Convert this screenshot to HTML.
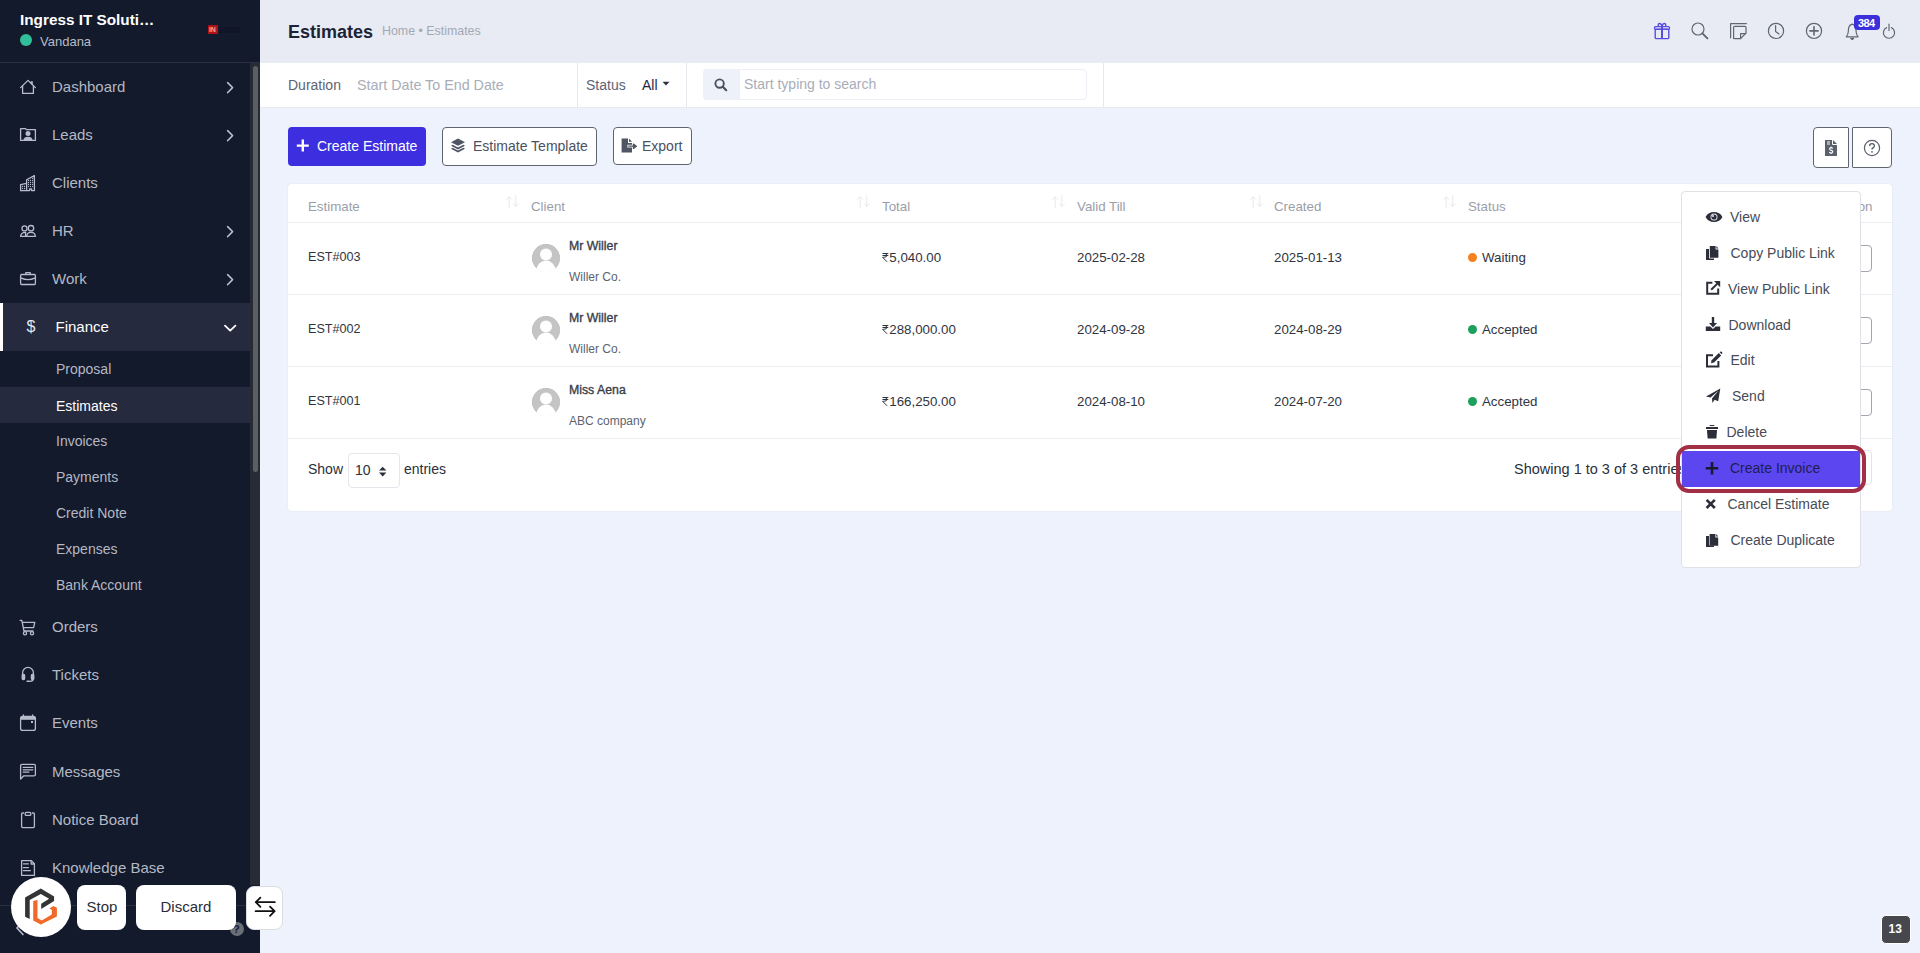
<!DOCTYPE html>
<html><head><meta charset="utf-8">
<style>
*{box-sizing:border-box;margin:0;padding:0}
html,body{width:1920px;height:953px;overflow:hidden;font-family:"Liberation Sans",sans-serif;background:#eef2fc;position:relative}
.a{position:absolute;white-space:nowrap;line-height:1}
svg{position:absolute;overflow:visible}
.mt{position:absolute;left:52px;font-size:15px;line-height:1;color:#b4b8c4;white-space:nowrap}
.st{position:absolute;left:56px;font-size:14px;line-height:1;color:#b4b8c4;white-space:nowrap}
.ic{fill:none;stroke:#b7bccb;stroke-width:1.3;stroke-linejoin:round;stroke-linecap:round}
.th{position:absolute;top:200px;font-size:13.3px;line-height:1;color:#9a9ea9;white-space:nowrap}
.td{position:absolute;font-size:13.3px;line-height:1;color:#30343e;white-space:nowrap}
.nm{position:absolute;left:569px;font-size:12.3px;-webkit-text-stroke:.35px #3a3e4a;line-height:1;color:#3a3e4a;white-space:nowrap}
.co{position:absolute;left:569px;font-size:12px;line-height:1;color:#5d6370;white-space:nowrap}
.hl{position:absolute;left:288px;width:1604px;height:1px;background:#eceef3}
.dt{position:absolute;font-size:14px;line-height:1;color:#464b57;white-space:nowrap}
.hic{fill:none;stroke:#62676f;stroke-width:1.2;stroke-linecap:round;stroke-linejoin:round}
.dk{fill:#2c2f3a}
</style></head><body>
<!-- SIDEBAR -->
<div class="a" style="left:0;top:0;width:260px;height:953px;background:#131a2b"></div>
<div class="a" style="left:20px;top:12px;font-size:15.3px;font-weight:bold;color:#fff">Ingress IT Soluti…</div>
<div class="a" style="left:20px;top:34px;width:12px;height:12px;border-radius:50%;background:#2fbf9b"></div>
<div class="a" style="left:40px;top:35px;font-size:13px;color:#b9bcc8">Vandana</div>
<div class="a" style="left:208px;top:25px;width:10px;height:9px;background:#b01218;border-radius:1px"></div>
<div class="a" style="left:209px;top:26px;font-size:7px;font-weight:bold;color:#f3a0a0;letter-spacing:-0.3px">IN</div>
<div class="a" style="left:219px;top:27px;width:21px;height:6px;background:#0f1424;opacity:.6"></div>
<div class="a" style="left:0;top:62px;width:260px;height:1px;background:#2a3040"></div>
<div class="a" style="left:250px;top:63px;width:10px;height:822px;background:#262b36"></div>
<div class="a" style="left:253px;top:66px;width:4.5px;height:406px;border-radius:3px;background:#5d5e62"></div>

<!-- rows -->
<div class="a" style="left:0;top:303px;width:250px;height:48px;background:#252a3f"></div>
<div class="a" style="left:0;top:303px;width:3px;height:48px;background:#fff"></div>
<div class="a" style="left:0;top:387px;width:250px;height:36px;background:#252a3f"></div>

<div class="mt" style="top:79px">Dashboard</div>
<div class="mt" style="top:127px">Leads</div>
<div class="mt" style="top:175px">Clients</div>
<div class="mt" style="top:223px">HR</div>
<div class="mt" style="top:271px">Work</div>
<div class="mt" style="top:319px;left:55.5px;color:#fff">Finance</div>
<div class="st" style="top:362px">Proposal</div>
<div class="st" style="top:398.5px;color:#fff">Estimates</div>
<div class="st" style="top:434px">Invoices</div>
<div class="st" style="top:470px">Payments</div>
<div class="st" style="top:506px">Credit Note</div>
<div class="st" style="top:542px">Expenses</div>
<div class="st" style="top:578px">Bank Account</div>
<div class="mt" style="top:619px">Orders</div>
<div class="mt" style="top:667px">Tickets</div>
<div class="mt" style="top:715px">Events</div>
<div class="mt" style="top:764px">Messages</div>
<div class="mt" style="top:812px">Notice Board</div>
<div class="mt" style="top:860px">Knowledge Base</div>

<!-- sidebar icons -->
<svg width="260" height="953" style="left:0;top:0">
 <g class="ic">
  <!-- home -->
  <path d="M20.6 87.6 L28 80.4 L35.4 87.6"/><path d="M22.6 85.8 V93.4 H33.4 V85.8"/>
  <!-- leads -->
  <path d="M20.6 140.4 V128.6 H25.6 L26.4 129.6 H35.4 V140.4 Z"/>
  <!-- clients -->
  <path d="M20.6 190.6 V184.6 L26.6 183.3"/><path d="M26.6 190.6 V179.8 L34.4 175.6 V190.6 H31.6 V189 H29.6 V190.6 H20.6"/>
  <!-- hr -->
  <circle cx="24.5" cy="228.4" r="2.5"/><circle cx="31" cy="228.2" r="2.7"/>
  <path d="M20.6 236.4 C20.8 233.6 22.4 232.3 25.6 232.3 L25.6 236.4 Z"/><path d="M26.6 236.4 C26.8 233.4 28.6 232.3 31 232.3 C33.4 232.3 35.2 233.4 35.4 236.4 Z"/>
  <!-- work -->
  <rect x="20.6" y="274.5" width="14.8" height="10" rx="1"/><path d="M25.8 274.4 V272.6 H30.2 V274.4"/><path d="M20.8 277.8 Q28 281.4 35.2 277.8"/>
  <!-- orders -->
  <path d="M20.2 620.4 H21.8 L24 631 H33"/><path d="M22.6 622.4 H34.8 L33.6 627.6 H24"/><circle cx="25" cy="633.2" r="1.6"/><circle cx="32" cy="633.2" r="1.6"/>
  <!-- tickets -->
  <path d="M22.6 675 V672.8 A5.4 5.4 0 0 1 33.4 672.8 V675"/><rect x="22.2" y="674.4" width="2.4" height="5.2" rx="1" style="fill:#b7bccb"/><rect x="31.4" y="674.4" width="2.4" height="5.2" rx="1" style="fill:#b7bccb"/><path d="M33.2 679.4 Q33 681 30 681.3"/>
  <!-- events -->
  <rect x="20.6" y="716.4" width="14.8" height="14" rx="2"/><path d="M21.2 717.4 H34.8 V719.2 H21.2Z" style="fill:#b7bccb"/><path d="M23.4 715 V717"/><path d="M32.6 715 V717"/>
  <!-- messages -->
  <path d="M22 764.4 H34 Q35.4 764.4 35.4 765.8 V774.8 Q35.4 775.8 34 775.8 H23.8 L20.6 779 V765.8 Q20.6 764.4 22 764.4 Z"/>
  <path d="M23.2 767.4 H32.8 M23.2 769.8 H32.8 M23.2 772.2 H28.8"/>
  <!-- notice -->
  <path d="M23.6 813 H22.6 Q21.6 813 21.6 814 V826.6 Q21.6 827.6 22.8 827.6 H33.2 Q34.4 827.6 34.4 826.6 V814 Q34.4 813 33.4 813 H32.4"/><rect x="25.2" y="812.4" width="5.6" height="3" rx="1"/>
  <!-- kb -->
  <path d="M21.6 860.6 H31.4 L34.4 863.8 V875.4 H21.6 Z"/><path d="M31.2 860.8 V864 H34.2"/><path d="M23.4 863.8 H28.4 M23.4 867.6 H28.4 M23.4 870.6 H30.4"/>
 </g>
 <g fill="#b7bccb">
  <path d="M30.6 81.2 H32.8 V85.6 L30.6 83.6 Z"/>
  <circle cx="28" cy="133.4" r="2.5"/><path d="M23.4 140.4 C23.6 137.8 25.4 136.8 28 136.8 C30.6 136.8 32.4 137.8 32.6 140.4 Z"/>
  <g><circle cx="22.5" cy="186.4" r=".65"/><circle cx="24.5" cy="186.4" r=".65"/><circle cx="22.5" cy="188.5" r=".65"/><circle cx="24.5" cy="188.5" r=".65"/><circle cx="28.5" cy="180.4" r=".65"/><circle cx="30.5" cy="180.4" r=".65"/><circle cx="32.6" cy="180.4" r=".65"/><circle cx="28.5" cy="182.5" r=".65"/><circle cx="30.5" cy="182.5" r=".65"/><circle cx="32.6" cy="182.5" r=".65"/><circle cx="28.5" cy="184.5" r=".65"/><circle cx="30.5" cy="184.5" r=".65"/><circle cx="32.6" cy="184.5" r=".65"/><circle cx="28.5" cy="186.6" r=".65"/><circle cx="30.5" cy="186.6" r=".65"/><circle cx="32.6" cy="186.6" r=".65"/><circle cx="32.6" cy="178.4" r=".65"/></g>
  <rect x="26.4" y="680.4" width="3.6" height="1.6" rx=".8"/>
  <rect x="31" y="721" width="2" height="2"/>
 </g>
 <g fill="none" stroke="#b7bccb" stroke-width="1.5" stroke-linecap="round" stroke-linejoin="round">
  <path d="M227.6 82.6 L232.6 87.6 L227.6 92.6"/>
  <path d="M227.6 130.6 L232.6 135.6 L227.6 140.6"/>
  <path d="M227.6 226.6 L232.6 231.6 L227.6 236.6"/>
  <path d="M227.6 274.6 L232.6 279.6 L227.6 284.6"/>
 </g>
 <path d="M225 325.6 L230.2 330.6 L235.4 325.6" fill="none" stroke="#fff" stroke-width="1.8" stroke-linecap="round" stroke-linejoin="round"/>
</svg>
<div class="a" style="left:26.5px;top:319px;font-size:16px;color:#e6e8ef">$</div>

<!-- HEADER -->
<div class="a" style="left:260px;top:0;width:1660px;height:63px;background:#e8ebf3"></div>
<div class="a" style="left:288px;top:22.5px;font-size:18px;font-weight:bold;color:#1c2336">Estimates</div>
<div class="a" style="left:382px;top:25.3px;font-size:12.4px;color:#a4a8b4">Home • Estimates</div>

<svg width="260" height="40" style="left:1650px;top:10px">
 <g fill="none" stroke="#5b4de0" stroke-width="1.4" stroke-linejoin="round">
  <rect x="5.2" y="19.2" width="13.6" height="9.4" rx="1.2"/><rect x="4.6" y="16.6" width="14.8" height="2.8" rx=".8"/>
  <path d="M12 16.8 V28.6" stroke-width="2"/>
  <path d="M12 16.4 C11 12.6 7.4 12.6 8.4 16.4 M12 16.4 C13 12.6 16.6 12.6 15.6 16.4"/>
 </g>
 <g class="hic">
  <circle cx="48" cy="19" r="6"/><path d="M52.4 23.4 L57.4 28.4" stroke-width="1.9"/>
  <path d="M80.6 27.8 V13.6 H96.4"/><path d="M83.6 28.6 V17.6 Q83.6 16.4 84.8 16.4 H94.8 Q96 16.4 96 17.6 V23 L90.6 28.6 H84.8 Q83.6 28.6 83.6 27.4Z"/><path d="M90.6 28.4 V23.6 H95.8"/>
  <circle cx="126" cy="20.9" r="7.6"/><path d="M125.6 15.6 V21.4 L129 24"/>
  <circle cx="164" cy="20.9" r="7.6"/><path d="M164 16.8 V25 M159.9 20.9 H168.1" stroke-width="1.6"/>
  <path d="M196.3 26.8 Q198.4 24.6 198.4 20.6 Q198.4 15.2 202.2 14.2 Q206 15.2 206 20.6 Q206 24.6 208.1 26.8 Z"/><path d="M200.8 28.4 L202.2 29.4 L203.6 28.4Z" fill="#60656f"/>
  <path d="M236.6 17.6 A5.6 5.6 0 1 0 241.4 17.6"/><path d="M239 14 V20.4"/>
 </g>
</svg>
<div class="a" style="left:1854px;top:15px;width:25.5px;height:15px;border-radius:4px;background:#3b2fdc"></div>
<div class="a" style="left:1858px;top:17.6px;font-size:11px;font-weight:bold;color:#fff;letter-spacing:-.6px">384</div>

<!-- FILTER BAR -->
<div class="a" style="left:260px;top:63px;width:1660px;height:44px;background:#fff"></div>
<div class="a" style="left:260px;top:107px;width:1660px;height:1px;background:#e7eaf1"></div>
<div class="a" style="left:288px;top:78px;font-size:14px;color:#5d6474">Duration</div>
<div class="a" style="left:357px;top:78px;font-size:14.3px;color:#a9adb8">Start Date To End Date</div>
<div class="a" style="left:577px;top:63px;width:1px;height:44px;background:#e6e8ee"></div>
<div class="a" style="left:586px;top:78px;font-size:14px;color:#5d6474">Status</div>
<div class="a" style="left:642px;top:78px;font-size:14px;color:#1f2840">All</div>
<svg width="10" height="6" style="left:662px;top:81px"><path d="M0.5 0.8 H7.5 L4 4.6Z" fill="#2a3040"/></svg>
<div class="a" style="left:686px;top:63px;width:1px;height:44px;background:#e6e8ee"></div>
<div class="a" style="left:703px;top:69px;width:384px;height:31px;border:1px solid #eceff5;border-radius:4px;background:#fff"></div>
<div class="a" style="left:703px;top:69px;width:37px;height:31px;border-radius:4px 0 0 4px;background:#eef1fa"></div>
<svg width="14" height="14" style="left:714px;top:78px"><circle cx="5.6" cy="5.6" r="4.2" fill="none" stroke="#4a5060" stroke-width="1.9"/><path d="M8.8 8.8 L12.2 12.2" stroke="#4a5060" stroke-width="2.2" stroke-linecap="round"/></svg>
<div class="a" style="left:744px;top:77px;font-size:14px;color:#a9adb8">Start typing to search</div>
<div class="a" style="left:1103px;top:63px;width:1px;height:44px;background:#e6e8ee"></div>

<!-- ACTION BUTTONS -->
<div class="a" style="left:288px;top:127px;width:138px;height:39px;background:#3d2fdf;border-radius:4px"></div>
<svg width="14" height="14" style="left:296px;top:139px"><path d="M6.8 0.6 V12.6 M0.8 6.6 H12.8" stroke="#fff" stroke-width="2.4"/></svg>
<div class="a" style="left:317px;top:139px;font-size:14px;color:#fff">Create Estimate</div>
<div class="a" style="left:442px;top:127px;width:155px;height:39px;border:1px solid #5f6570;border-radius:4px;background:#fff"></div>
<svg width="16" height="16" style="left:450px;top:138px">
 <path d="M8 0.6 L15 4.2 L8 7.8 L1 4.2Z" fill="#4f5562"/>
 <path d="M2.6 6.8 L8 9.6 L13.4 6.8 L15 7.8 L8 11.4 L1 7.8Z" fill="#4f5562"/>
 <path d="M2.6 9.8 L8 12.6 L13.4 9.8 L15 10.8 L8 14.4 L1 10.8Z" fill="#4f5562"/>
</svg>
<div class="a" style="left:473px;top:139px;font-size:14px;color:#4b5160">Estimate Template</div>
<div class="a" style="left:613px;top:127px;width:79px;height:38px;border:1px solid #5f6570;border-radius:4px;background:#fff"></div>
<svg width="16" height="16" style="left:621px;top:138px">
 <path d="M0.6 0.6 H7 V5 H11 V6.8 H6.4 V9.6 H11 V14.6 H0.6Z" fill="#4f5562"/><path d="M8 0.6 L11 3.8 H8Z" fill="#4f5562"/>
 <path d="M7.2 8.2 H12.4 V6 L15.4 8.2 L12.4 10.4 V8.2" fill="#4f5562" stroke="#4f5562" stroke-width="1.2" stroke-linejoin="round"/>
</svg>
<div class="a" style="left:642px;top:139px;font-size:14px;color:#4b5160">Export</div>

<div class="a" style="left:1813px;top:127px;width:36px;height:41px;border:1.3px solid #5f6670;border-radius:4px 1px 1px 4px;background:#fff"></div>
<div class="a" style="left:1852px;top:127px;width:40px;height:41px;border:1.3px solid #5f6670;border-radius:1px 4px 4px 1px;background:#fff"></div>
<svg width="14" height="17" style="left:1825px;top:140px">
 <path d="M0 0 H7 V4 Q7 5 8 5 H12 V16 H0Z" fill="#5a606c"/><path d="M8 0 L12 4 H8Z" fill="#5a606c"/>
 <path d="M2 2 H5 M2 4 H5" stroke="#fff" stroke-width="1"/>
 <path d="M7.6 8.6 Q7 7.6 5.9 7.7 Q4.5 7.9 4.6 9 Q4.8 10 6.2 10.3 Q7.8 10.7 7.7 11.8 Q7.5 13 6 13 Q4.8 13 4.3 12" fill="none" stroke="#fff" stroke-width="1.2"/>
 <path d="M6 6.6 V7.6 M6 13 V14" stroke="#fff" stroke-width="1"/>
</svg>
<svg width="18" height="18" style="left:1863px;top:139px">
 <circle cx="9" cy="9" r="7.6" fill="none" stroke="#5a606c" stroke-width="1.2"/>
 <path d="M6.6 7 Q6.6 4.6 9 4.6 Q11.4 4.6 11.4 6.8 Q11.4 8.2 9.8 9 Q9 9.4 9 10.6" fill="none" stroke="#5a606c" stroke-width="1.4"/>
 <circle cx="9" cy="12.8" r=".9" fill="#5a606c"/>
</svg>

<!-- TABLE CARD -->
<div class="a" style="left:288px;top:184px;width:1604px;height:327px;background:#fff;border-radius:4px;box-shadow:0 0 1.5px rgba(60,70,100,.12)"></div>
<div class="th" style="left:308px">Estimate</div>
<div class="th" style="left:531px">Client</div>
<div class="th" style="left:882px">Total</div>
<div class="th" style="left:1077px">Valid Till</div>
<div class="th" style="left:1274px">Created</div>
<div class="th" style="left:1468px">Status</div>
<div class="th" style="left:1835.5px">Action</div>
<svg width="1000" height="20" style="left:500px;top:190px">
 <g stroke="#e8e9ec" stroke-width="1" fill="none" stroke-linecap="round" stroke-linejoin="round">
  <path d="M9.2 17.6 V6.8 M6.6 9.4 L9.2 6.8 L11.8 9.4"/><path d="M15.8 5.8 V16.4 M13.2 13.8 L15.8 16.4 L18.4 13.8"/>
  <path d="M360.2 17.6 V6.8 M357.6 9.4 L360.2 6.8 L362.8 9.4"/><path d="M366.8 5.8 V16.4 M364.2 13.8 L366.8 16.4 L369.4 13.8"/>
  <path d="M555.2 17.6 V6.8 M552.6 9.4 L555.2 6.8 L557.8 9.4"/><path d="M561.8 5.8 V16.4 M559.2 13.8 L561.8 16.4 L564.4 13.8"/>
  <path d="M753.2 17.6 V6.8 M750.6 9.4 L753.2 6.8 L755.8 9.4"/><path d="M759.8 5.8 V16.4 M757.2 13.8 L759.8 16.4 L762.4 13.8"/>
  <path d="M946.2 17.6 V6.8 M943.6 9.4 L946.2 6.8 L948.8 9.4"/><path d="M952.8 5.8 V16.4 M950.2 13.8 L952.8 16.4 L955.4 13.8"/>
 </g>
</svg>
<div class="hl" style="top:222px"></div>
<div class="hl" style="top:294px"></div>
<div class="hl" style="top:366px"></div>
<div class="hl" style="top:438px"></div>

<div class="td" style="left:308px;top:250.8px;font-size:12.6px">EST#003</div>
<div class="td" style="left:308px;top:322.8px;font-size:12.6px">EST#002</div>
<div class="td" style="left:308px;top:394.8px;font-size:12.6px">EST#001</div>

<svg width="30" height="200" style="left:531px;top:243px">
 <defs><clipPath id="av"><circle cx="15" cy="15" r="14.3"/></clipPath></defs>
 <g id="avt" clip-path="url(#av)"><circle cx="15" cy="15" r="14.3" fill="#c4c4c4"/><circle cx="15" cy="11.4" r="6" fill="#fff"/><ellipse cx="15" cy="27.6" rx="9.6" ry="10.2" fill="#fff"/></g>
 <use href="#avt" y="72"/><use href="#avt" y="144"/>
</svg>
<div class="nm" style="top:239.7px">Mr Willer</div>
<div class="co" style="top:270.5px">Willer Co.</div>
<div class="nm" style="top:311.7px">Mr Willer</div>
<div class="co" style="top:342.5px">Willer Co.</div>
<div class="nm" style="top:383.7px">Miss Aena</div>
<div class="co" style="top:414.5px">ABC company</div>

<div class="td" style="left:882px;top:250.5px"><span style="display:inline-block;width:7.3px;height:9px;position:relative;vertical-align:baseline"><svg width="8" height="10" style="left:0.4px;top:0"><path d="M0.5 0.5 H6.3 M0.5 2.5 H6.3 M2.6 0.5 Q5 0.7 5 2.5 Q4.9 4.3 1.5 4.3 H0.6 L5.1 8.8" fill="none" stroke="#30343e" stroke-width="1" stroke-linejoin="round"/></svg></span>5,040.00</div>
<div class="td" style="left:882px;top:322.5px"><span style="display:inline-block;width:7.3px;height:9px;position:relative;vertical-align:baseline"><svg width="8" height="10" style="left:0.4px;top:0"><path d="M0.5 0.5 H6.3 M0.5 2.5 H6.3 M2.6 0.5 Q5 0.7 5 2.5 Q4.9 4.3 1.5 4.3 H0.6 L5.1 8.8" fill="none" stroke="#30343e" stroke-width="1" stroke-linejoin="round"/></svg></span>288,000.00</div>
<div class="td" style="left:882px;top:394.5px"><span style="display:inline-block;width:7.3px;height:9px;position:relative;vertical-align:baseline"><svg width="8" height="10" style="left:0.4px;top:0"><path d="M0.5 0.5 H6.3 M0.5 2.5 H6.3 M2.6 0.5 Q5 0.7 5 2.5 Q4.9 4.3 1.5 4.3 H0.6 L5.1 8.8" fill="none" stroke="#30343e" stroke-width="1" stroke-linejoin="round"/></svg></span>166,250.00</div>
<div class="td" style="left:1077px;top:250.5px">2025-02-28</div>
<div class="td" style="left:1077px;top:322.5px">2024-09-28</div>
<div class="td" style="left:1077px;top:394.5px">2024-08-10</div>
<div class="td" style="left:1274px;top:250.5px">2025-01-13</div>
<div class="td" style="left:1274px;top:322.5px">2024-08-29</div>
<div class="td" style="left:1274px;top:394.5px">2024-07-20</div>
<div class="a" style="left:1468px;top:253px;width:9px;height:9px;border-radius:50%;background:#f4801f"></div>
<div class="td" style="left:1482px;top:250.5px">Waiting</div>
<div class="a" style="left:1468px;top:325px;width:9px;height:9px;border-radius:50%;background:#1ea05a"></div>
<div class="td" style="left:1482px;top:322.5px">Accepted</div>
<div class="a" style="left:1468px;top:397px;width:9px;height:9px;border-radius:50%;background:#1ea05a"></div>
<div class="td" style="left:1482px;top:394.5px">Accepted</div>
<div class="a" style="left:1834px;top:245px;width:38px;height:27px;border:1px solid #a2a6ae;border-radius:4px"></div>
<div class="a" style="left:1834px;top:317px;width:38px;height:27px;border:1px solid #a2a6ae;border-radius:4px"></div>
<div class="a" style="left:1834px;top:389px;width:38px;height:27px;border:1px solid #a2a6ae;border-radius:4px"></div>

<div class="a" style="left:308px;top:462.4px;font-size:14px;color:#2b2f3a">Show</div>
<div class="a" style="left:347.5px;top:453px;width:52px;height:35px;border:1px solid #e4e6eb;border-radius:4px"></div>
<div class="a" style="left:355px;top:463.3px;font-size:14px;color:#2b2f3a">10</div>
<svg width="10" height="12" style="left:378px;top:465.5px"><path d="M1 4.6 H8.4 L4.7 0.8Z M1 6.6 H8.4 L4.7 10.4Z" fill="#2b2f3a"/></svg>
<div class="a" style="left:404px;top:462.4px;font-size:14px;color:#2b2f3a">entries</div>
<div class="a" style="left:1514px;top:462.3px;font-size:14.5px;color:#2b2f3a">Showing 1 to 3 of 3 entries</div>
<div class="a" style="left:1836px;top:450px;width:36px;height:35px;border:1px solid #e2e4ea;border-radius:4px"></div>

<!-- DROPDOWN -->
<div class="a" style="left:1681px;top:191px;width:180px;height:377px;background:#fff;border:1px solid #dfe1e6;border-radius:4px"></div>
<div class="dt" style="left:1730px;top:209.8px">View</div>
<div class="dt" style="left:1730.5px;top:245.8px">Copy Public Link</div>
<div class="dt" style="left:1728px;top:281.8px">View Public Link</div>
<div class="dt" style="left:1728.5px;top:317.8px">Download</div>
<div class="dt" style="left:1730.5px;top:353.3px">Edit</div>
<div class="dt" style="left:1732px;top:389.3px">Send</div>
<div class="dt" style="left:1726.5px;top:425.3px">Delete</div>
<div class="a" style="left:1681.5px;top:451px;width:178.5px;height:35.5px;background:#5b46f0"></div>
<div class="dt" style="left:1730px;top:461.3px;color:#1e1f4e">Create Invoice</div>
<div class="dt" style="left:1727.5px;top:497.3px">Cancel Estimate</div>
<div class="dt" style="left:1730.5px;top:533.3px">Create Duplicate</div>
<div class="a" style="left:1676px;top:445px;width:190px;height:47.5px;border:4px solid #a22f45;border-radius:13px"></div>

<svg width="40" height="360" style="left:1700px;top:200px">
 <g class="dk">
  <!-- eye -->
  <path d="M5.6 17 C8.4 10.4 19.6 10.4 22.4 17 C19.6 23.6 8.4 23.6 5.6 17Z"/>
  <circle cx="14" cy="17" r="3.5" fill="#e8e9f0"/><circle cx="14" cy="17" r="2.6"/><circle cx="13" cy="16" r=".9" fill="#fff"/>
  <!-- copy -->
  <path d="M6 49 H9 V57.6 Q9 58.6 10 58.6 H14 V60 H6Z"/>
  <path d="M9.8 46 H15.6 V49.4 H18.4 V57.8 H9.8Z"/><path d="M16.4 46 L18.4 48.4 H16.4Z"/>
  <!-- ext link -->
  <path d="M12.4 82.8 H7.2 V93.8 H18.2 V88.6" fill="none" stroke="#2c2f3a" stroke-width="2"/>
  <path d="M11.2 89.8 L18.6 82.4" stroke="#2c2f3a" stroke-width="2"/><path d="M14 81 H20.2 V87.2Z"/>
  <!-- download -->
  <path d="M11.8 117 H14.2 V123 H17 L13 127.6 L9 123 H11.8Z"/><path d="M5.8 126.4 H10.4 L13 129 L15.6 126.4 H20.2 V131 H5.8Z"/>
  <!-- edit -->
  <path d="M13 155.2 H7 V166.6 H18.4 V161" fill="none" stroke="#2c2f3a" stroke-width="2"/>
  <path d="M11 163.2 L11.6 160.2 L18.8 153 L21.2 155.4 L14 162.6Z"/><path d="M19.6 152.2 L20.6 151.6 Q21.4 151.4 22 152 Q22.6 152.6 22.2 153.4 L21.8 154.2Z"/>
  <!-- send -->
  <path d="M20.3 188.6 L6 196.6 L10.6 197.6 L18.6 190.6 L12 198.6 L12.4 203 L14.6 199.8 L18.2 201.2Z"/>
  <!-- trash -->
  <path d="M6 227 H18 V229 H6Z"/><path d="M10 225 H14 L14.6 226 H9.4Z"/><path d="M7 230 H17 L16.4 238.6 H7.6Z"/>
 </g>
 <g fill="#2c2f3a">
  <path d="M6 305 H9 V313.6 Q9 314.6 10 314.6 H14 V316 H6Z" transform="translate(0,31)"/>
  <path d="M9.8 333 H15.6 V336.4 H18.4 V344.8 H9.8Z" transform="translate(-0.2,1)"/><path d="M16.2 334 L18.2 336.4 H16.2Z"/>
 </g>
 <path d="M12 262 V274.4 M5.8 268.2 H18.2" stroke="#1a1b33" stroke-width="2.6"/>
 <path d="M6.6 299.8 L14.8 308 M14.8 299.8 L6.6 308" stroke="#2c2f3a" stroke-width="2.6"/>
</svg>

<!-- BOTTOM OVERLAYS -->
<div class="a" style="left:0;top:905px;width:250px;height:1px;background:#2a3040"></div>
<svg width="30" height="20" style="left:0px;top:915px"><path d="M23.4 6 L17 13 L23.4 20" fill="none" stroke="#b7bccb" stroke-width="1.6"/></svg>
<div class="a" style="left:229.5px;top:921.5px;width:14px;height:14px;border-radius:50%;background:#6b6f78"></div><div class="a" style="left:233px;top:923.5px;font-size:11px;font-weight:bold;color:#1b2030">?</div>
<div class="a" style="left:11px;top:877px;width:60px;height:60px;border-radius:50%;background:#fff"></div>
<svg width="40" height="44" style="left:20px;top:884px">
 <path d="M5.1 32.8 V13.4 L20.8 4.6 L34.1 12.5 V17.1 L21.2 24.9 V19.8 L29.1 14.8 L20.8 9.9 L9.7 15.9 V35.1 Z" fill="#333436"/>
 <path d="M13.2 17.1 L17.5 15.9 V34.1 L21.7 36.4 L31.8 30.4 V25.8 L29.4 24.4 L33.4 22 L36.9 23.8 V32.4 L20.8 40.6 L13.2 36.4 Z" fill="#f26a2a"/>
</svg>
<div class="a" style="left:77px;top:885px;width:49px;height:45px;border-radius:8px;background:#fff"></div>
<div class="a" style="left:86.5px;top:899px;font-size:15px;color:#2a2d36">Stop</div>
<div class="a" style="left:136px;top:885px;width:100px;height:45px;border-radius:8px;background:#fff"></div>
<div class="a" style="left:160.5px;top:899px;font-size:15px;color:#2a2d36">Discard</div>
<div class="a" style="left:246px;top:885.5px;width:37px;height:44px;border-radius:8px;background:#fff;border:1px solid #dcdde2"></div>
<svg width="24" height="24" style="left:254px;top:895px">
 <path d="M1.8 7.2 H20.8 M1.8 7.2 L6.4 2.6 M1.8 7.2 L6.4 11.8 M20.6 16.2 H1.6 M20.6 16.2 L16 11.6 M20.6 16.2 L16 20.8" fill="none" stroke="#111" stroke-width="1.8" stroke-linecap="round" stroke-linejoin="round"/>
</svg>

<div class="a" style="left:1880.5px;top:914.5px;width:30px;height:29px;border-radius:5px;background:#46484d;border:1px solid #fff"></div>
<div class="a" style="left:1888.5px;top:923.3px;font-size:12px;font-weight:bold;color:#fff">13</div>
</body></html>
